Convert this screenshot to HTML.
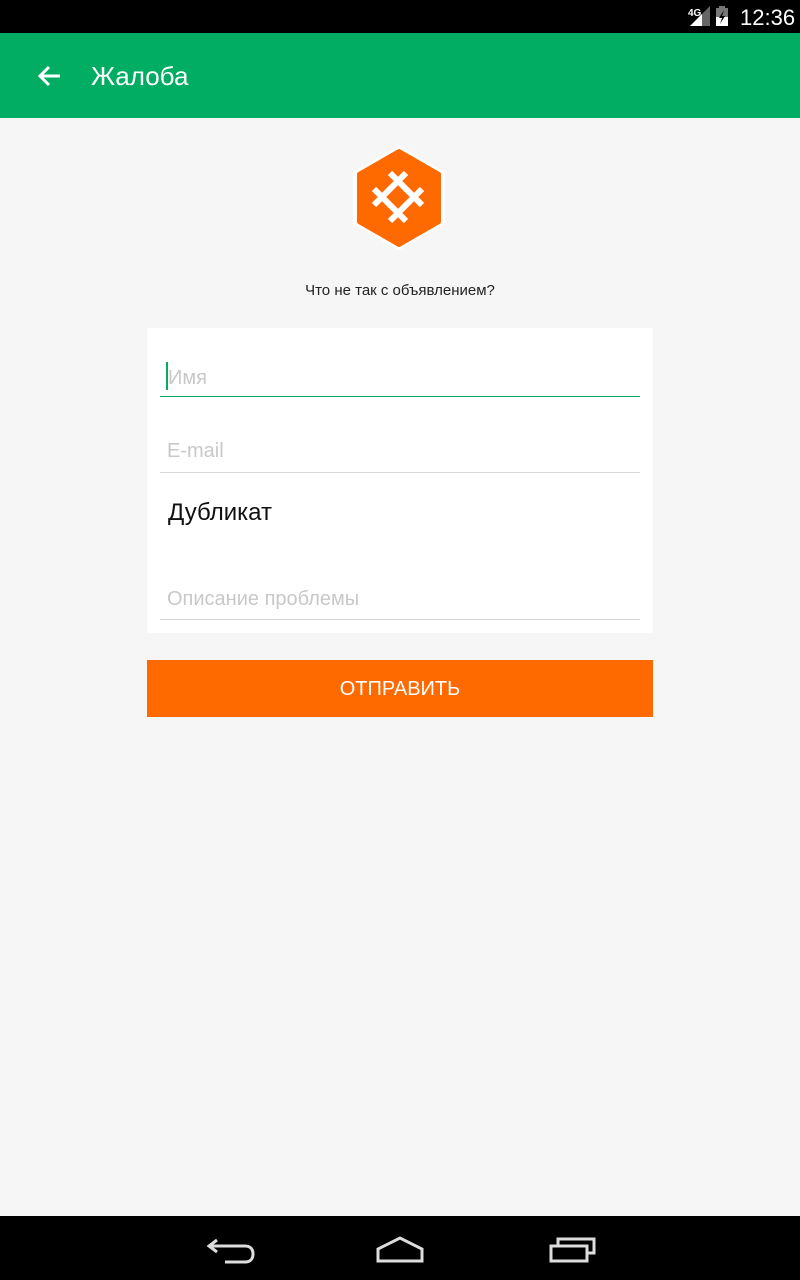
<!DOCTYPE html>
<html><head><meta charset="utf-8"><style>
body{margin:0;width:800px;height:1280px;background:#f6f6f6;font-family:"Liberation Sans","DejaVu Sans",sans-serif;position:relative;overflow:hidden}
.sb{position:absolute;top:0;left:0;width:800px;height:33px;background:#000;color:#fff}
.ab{position:absolute;top:33px;left:0;width:800px;height:85px;background:#00ad62;color:#fff}
.nb{position:absolute;top:1216px;left:0;width:800px;height:64px;background:#000}
.card{position:absolute;left:147px;top:328px;width:506px;height:305px;background:#fff}
.f{position:absolute;left:13px;width:480px;border-bottom:1px solid #d6d6d6;font-size:20px;color:#c8c8c8}
.btn{position:absolute;left:147px;top:660px;width:506px;height:57px;background:#ff6a00;color:#fff;font-size:20px;text-align:center;line-height:59px}
</style></head><body>
<div class="sb">
<svg style="position:absolute;left:688px;top:6px" width="50" height="22">
<text x="0" y="10" font-size="10" font-weight="bold" fill="#fff" font-family="Liberation Sans">4G</text>
<path d="M2 20 L22 0 L22 20Z" fill="#666"/><path d="M2 20 L14 8 L14 20Z" fill="#fff"/>
<rect x="28" y="2" width="12" height="18" fill="#777"/><rect x="31" y="0" width="6" height="3" fill="#777"/><rect x="28" y="11" width="12" height="9" fill="#fff"/>
<path d="M36 4 L31 12 L34 12 L32 18 L37 10 L34 10Z" fill="#000"/>
</svg>
<div style="position:absolute;left:740px;top:5px;font-size:22px">12:36</div>
</div>
<div class="ab">
<svg style="position:absolute;left:36px;top:31px" width="26" height="24"><path d="M24 12H4M13 3L4 12l9 9" stroke="#fff" stroke-width="3" fill="none"/></svg>
<div style="position:absolute;left:91px;top:28px;font-size:26px">Жалоба</div>
</div>
<svg style="position:absolute;left:349px;top:144px" width="100" height="108" viewBox="0 0 100 108">
<polygon points="50,2 96,28 96,80 50,106 4,80 4,28" fill="#fff"/>
<polygon points="50,7 90,30 90,78 50,101 10,78 10,30" fill="#ff6a00" stroke="#ff6a00" stroke-width="4" stroke-linejoin="round"/>
<g stroke="#fff" stroke-width="6">
<line x1="25" y1="61" x2="57" y2="29"/><line x1="41" y1="77" x2="73" y2="45"/>
<line x1="41" y1="29" x2="73" y2="61"/><line x1="25" y1="45" x2="57" y2="77"/>
</g></svg>
<div style="position:absolute;left:0;width:800px;top:282px;text-align:center;font-size:15px;color:#222">Что не так с объявлением?</div>
<div class="card">
<div class="f" style="top:34px;height:34px;border-bottom:1px solid #00ad62;padding-left:6px;width:474px"><span style="display:inline-block;width:2px;height:28px;background:#00ad62;vertical-align:-6px"></span>Имя</div>
<div class="f" style="top:112px;height:32px;padding-left:7px;width:473px">E-mail</div>
<div style="position:absolute;left:21px;top:171px;font-size:24px;color:#111">Дубликат</div>
<div class="f" style="top:260px;height:31px;padding-left:7px;width:473px">Описание проблемы</div>
</div>
<div class="btn">ОТПРАВИТЬ</div>
<div class="nb">
<svg style="position:absolute;left:205px;top:18px" width="50" height="30"><path d="M12 6L4 12l8 6M4 12h36c6 0 8 4 8 8s-2 8-8 8H20" stroke="#ddd" stroke-width="3" fill="none"/></svg>
<svg style="position:absolute;left:375px;top:18px" width="50" height="30"><path d="M3 27V15L25 4l22 11v12Z" stroke="#ddd" stroke-width="3" fill="none"/></svg>
<svg style="position:absolute;left:548px;top:18px" width="50" height="30"><path d="M3 12h36v15H3Z M10 12V5h36v14h-7" stroke="#ddd" stroke-width="3" fill="none"/></svg>
</div>
</body></html>
